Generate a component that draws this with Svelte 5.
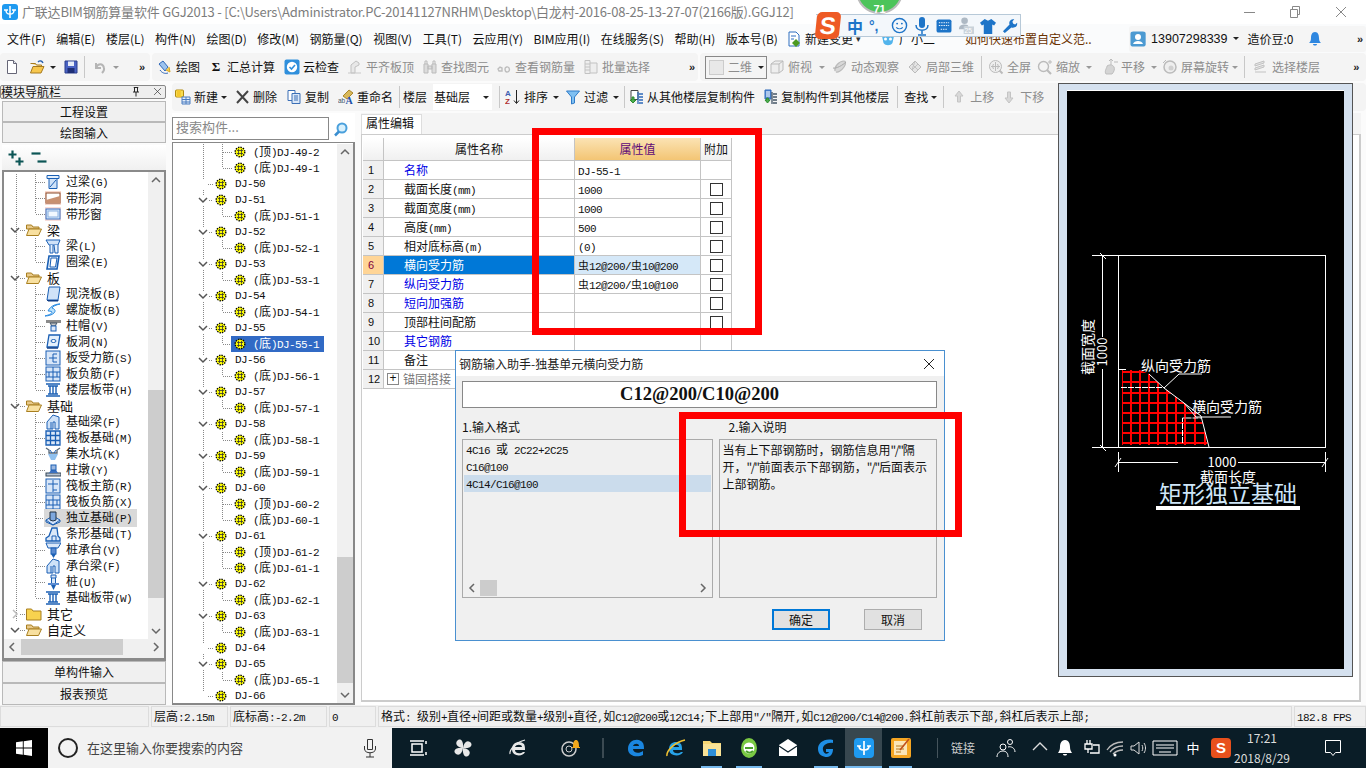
<script>
  const B = '#1a5fb4';
  const L = '#cfe2f8';
  const line = (d, c = B, f = 'none', w = 1) => `<path d="${d}" fill="${f}" stroke="${c}" stroke-width="${w}"/>`;

  // 16x16 icons
  const icons = {
    doc: line('M3.5 1.5h6l3 3v10h-9z', '#667', '#fff') + line('M9.5 1.5v3h3', '#667', '#e4e8f0'),
    open: line('M1.5 4.5h5l1 1.5h5v2', '#a67a20', '#f5d67a') + line('M1.5 14l2.5-6.5h11l-3 6.5z', '#a67a20', '#f7c74d') + line('M9 3c2-2 4-1 5 1', '#2a62b0', 'none', 1.4),
    save: line('M2 2h12v12H2z', '#2b3f8c', '#4a63c4') + '<rect x="5" y="2.5" width="6" height="4.5" fill="#e6ecf8"/><rect x="4.5" y="9" width="7" height="5" fill="#1e2f77"/>',
    undo: line('M5 4v5h5M5 9c2-5 7-5 8 0 .5 2-1 4-2 5', '#b5b5b5', 'none', 2),
    draw: line('M2 5l4-3 5 6-3 4z', '#3168b8', '#9cc3ee') + line('M9 11l4 2-1-5', '#d9a520', '#f5cf50') + line('M3 11c2 3 5 4 8 3', '#3168b8'),
    cloud: '<rect x="0.5" y="0.5" width="15" height="15" rx="2" fill="#2f8fdc"/><circle cx="8" cy="8" r="5.2" fill="#fff"/>' + line('M5.5 8l2 2 3.5-4', '#2f8fdc', 'none', 1.6),
    g1: line('M4 14V6l5-4 3 2v2l-4 2v6z', '#c0c0c0', '#e8e8e8') + line('M1 14h13', '#c8c8c8'),
    g2: line('M2 5h4v9H2zM10 5h4v9h-4zM6 7h4v3H6z', '#bbb', '#dcdcdc') + line('M3 5V2h2v3M11 5V2h2v3', '#bbb'),
    g3: line('M2 10l2-2 2 1v3H3zM9 10c0-2 3-3 4-1s0 4-2 4-2-2-2-3', '#bdbdbd', 'none', 1.4),
    g4: line('M2 1.5h5v13H2zM2 5h5M2 8h5M2 11h5M7 4h7v10H7', '#c2c2c2', '#eee'),
    cube: line('M2 5l4-3h8v9l-4 3H2zM2 5h8v9M10 5l4-3', '#bbb', '#eee'),
    orbit: line('M3 12C2 8 7 2 12 2c2 0 2 3 0 6s-6 6-8 5', '#bbb', '#d8d8d8', 1.2) + line('M1 9c3 1 10-3 13-6', '#aaa'),
    local: line('M2 8l6-6 6 6-6 6z', '#bbb', '#e4e4e4') + line('M5 5l6 6M8 2l-3 9M11 5l-6 6', '#c2c2c2'),
    full: '<circle cx="7.5" cy="7.5" r="6" fill="#eee" stroke="#bbb"/>' + line('M7.5 3v9M3 7.5h9M5.5 5l-1 2.5 1 2.5M9.5 5l1 2.5-1 2.5', '#bbb') + line('M11.5 11.5l3 3', '#bbb', 'none', 2),
    zoom: '<circle cx="6.5" cy="7.5" r="5" fill="#f4f4f4" stroke="#bbb" stroke-width="1.4"/>' + line('M10 11l4 4', '#bbb', 'none', 2.2) + line('M11 3h4M13 1v4', '#bbb'),
    pan: line('M4 15c-2-3 1-6 1-8 3-2 6-1 7 1s0 5-2 7z', '#bdbdbd', '#d4d4d4') + line('M9 0v6M7 2l2-2 2 2M12 3h4', '#bbb'),
    rot: '<circle cx="8" cy="8" r="6" fill="#eee" stroke="#bbb" stroke-width="1.5"/><circle cx="9" cy="9" r="2.5" fill="#d0d0d0"/>' + line('M1 4l3-3', '#bbb'),
    floors: line('M2 5l9-3v2l-9 3zM2 9l9-3v2l-9 3zM2 13h11', '#c2c2c2', '#e4e4e4'),
    newc: '<rect x="0.5" y="1" width="8" height="7" rx="1" fill="#f8dc50" stroke="#b08a10"/><rect x="2" y="1" width="3.8" height="7" fill="#f4c82e"/>' + line('M7 8h8v7H7zM7 10.5h8M7 13h8M11 8v7', '#4a7cc0', '#e4eefa'),
    del: line('M3 2l11 12M14 2L3 14', '#444', 'none', 2),
    copy: line('M2 1.5h7v10H2z', '#3b6fb6', '#fff') + line('M6 4.5h8v10H6z', '#3b6fb6', '#dbe8f8') + line('M8 7h4M8 9h4M8 11h4', '#3b6fb6'),
    rename: line('M5 7l6-6 4 3-6 6z', '#a9862a', '#d8b85a') + '<text x="0" y="14" font-size="6.500" fill="#456" font-family="Liberation Sans">ab</text><text x="7.500" y="15" font-size="10" font-weight="700" fill="#1c4fa8" font-family="Liberation Serif">A</text>',
    sort: '<text x="0" y="7" font-size="8" font-weight="700" fill="#3f5fb0" font-family="Liberation Sans">A</text><text x="0" y="15" font-size="8" font-weight="700" fill="#b03030" font-family="Liberation Sans">Z</text>' + line('M11.5 1v13M9 11.5l2.5 3 2.5-3', '#222'),
    filter: line('M1.5 2h13L9.5 8v6l-3 1V8z', '#2f7bc8', '#7fc0f2'),
    fromc: line('M3 1.5h7v9H3z', '#444', '#fff') + line('M2 11l3 3 3-3H6V8H4v3z', '#2e8b2e', '#4cb050') + line('M11 5h4M11 8h4M11 11h4M11 14h4M10 3v12', '#2d68b8', 'none', 1.3),
    toc: line('M3 1h6v9H3z', '#2d68b8', '#5b8fd8') + line('M4 3h4M4 5h4M4 7h4', '#fff') + line('M3 11l2.5 3 2.5-3H6.3V9H4.700v2z', '#2e8b2e', '#4cb050') + line('M11 5h4M11 8h4M11 11h4M11 14h4M10 3v12', '#456', 'none', 1.3),
    up: line('M8 2l4 5h-2.500v6h-3V7H4z', '#c4c4c4', '#d8d8d8'),
    down: line('M8 14l4-5H9.500V3h-3v6H4z', '#c4c4c4', '#d8d8d8'),
    change: line('M3 1h7l3 3v11H3z', '#2f6fc0', '#fff') + line('M5 5h5M5 8h3', '#2f6fc0') + '<path d="M10 8l4 4-4 4-4-4z" fill="#4d9a22"/>',
    robot: '<path d="M2 5h12l-1.500 7c-2 3-7 3-9 0z" fill="#52b4ec"/><circle cx="5.500" cy="8" r="1.500" fill="#fff"/><circle cx="10.500" cy="8" r="1.500" fill="#fff"/>',
    user: '<rect x="0.500" y="0.500" width="16" height="19" rx="3" fill="#4c9ad2" transform="scale(.95 .8)"/><circle cx="8" cy="6" r="3" fill="#fff"/><path d="M3 13c1-4 9-4 10 0z" fill="#fff"/>',
    bell: '<path d="M8 1c3 0 4 3 4 6s1 4 2 5H2c1-1 2-2 2-5s1-6 4-6z" fill="#2f87e0"/><path d="M6 13h4c0 2-4 2-4 0z" fill="#2f87e0"/>',
    plus: line('M4.500 0.500v8M0.500 4.500h8', '#0c5555', 'none', 2.200) + line('M11.500 7.500v8M7.500 11.500h8', '#0c5555', 'none', 2.200),
    minus: line('M0.500 3.500h9', '#0c5555', 'none', 2.200) + line('M6.500 11.500h9', '#0c5555', 'none', 2.200),
    search: '<circle cx="9" cy="7" r="4.500" fill="#d8f0fc" stroke="#4aa0dc" stroke-width="2"/>' + line('M6 10.500l-4 4', '#3a8ed0', 'none', 2.500),
    pin: line('M5 2h6M6 2v6M10 2v6M4 8h8M8 8v6', '#222', 'none', 1.300),
    close: line('M3 3l10 10M13 3L3 13', '#333'),
    // nav tree
    lintel: line('M2 1.500h12v3H2z', B, '#e4f0fc') + line('M4 4.500h8v10H4z', B, L) + line('M5 13l6-7', B),
    hole: '<rect x="0" y="1" width="16" height="14" fill="#f8d8cc"/><rect x="1" y="3" width="14" height="10" fill="#fff" stroke="#8a4a2a"/><path d="M1 10l14-4v7H1z" fill="#c89070"/>',
    win: '<rect x="0" y="1" width="16" height="14" fill="#f8dcd8"/><rect x="1" y="3" width="14" height="10" fill="#d8e8fa" stroke="#3a70c0"/><rect x="3" y="5" width="10" height="6" fill="#f2f8ff" stroke="#8ab0e0"/>',
    beam: line('M1 2h14l-2 5H4z', B, L) + line('M5 7v8h3V7M9 7l1 8h3V7', B, '#e4f0fc'),
    ring: line('M4 2h10l-2 13H2z', B, '#e4f0fc', 1.600) + line('M6 4h6l-1.500 9H5z', B, '#fff'),
    slab: line('M4 1h11l-2 13H2z', B, L) + line('M2 14l1 1h10l0-1', '#113f88', '#113f88'),
    spiral: line('M3 9C6 3 12 2 15 2c-4 1-7 2-8 4 3 1 4 3 2 5s-6 3-9 3c3-1 7-2 7-4-1-1-3-1-4-1z', '#2a8ae0', '#b8e0fb'),
    cap: '<rect x="1" y="2" width="15" height="3" fill="#8a8a8a"/><path d="M5 5h7l-2 3H7z" fill="#c8c8c8" stroke="#456"/><rect x="6" y="8" width="5" height="5" fill="#dde8f8" stroke="#1a5fb4"/>',
    slabh: line('M4 1h11l-2 12H2z', B, '#e4f0fc', 1.300) + '<ellipse cx="8.500" cy="7" rx="2.500" ry="1.500" fill="#fff" stroke="#1a5fb4"/>' + line('M2 14h11', '#113f88', 'none', 1.500),
    srebar: '<rect x="1" y="1" width="14" height="14" fill="#d8e6f8" stroke="#1a5fb4"/>' + line('M8 4v8M8 4h4M4 8h8M8 12h4', '#1a5fb4'),
    sneg: '<rect x="1" y="1" width="14" height="14" fill="#d8e6f8" stroke="#1a5fb4"/>' + line('M8 1v14M1 6h14M1 11h14M4 6v5M12 6v5', '#1a5fb4'),
    band: line('M1 2h14M1 14h14M3 4h10M3 12h10M5 4v8M8 4v8M11 4v8', B, 'none', 1.400),
    fbeam: line('M2 15V8l6-7 6 2v12h-4V8H8v7z', B, L) + line('M6 15V8', B),
    raft: line('M1 1h14v14H1zM1 5.500h14M1 10.500h14M5.500 1v14M10.500 1v14', B, '#dbe8f8', 1.300),
    pit: line('M1 2l3 2v3h8V4l3-2', '#567', 'none', 1.300) + '<path d="M3 8h10l-3 6H6z" fill="#8fc0ef"/>' + line('M5 4l2 3M11 4L9 7', '#1a5fb4'),
    pier: '<rect x="1" y="11" width="15" height="3" fill="#b8c4d4" stroke="#345"/><path d="M4 11l2-3h5l2 3z" fill="#3a70c0"/><rect x="6" y="3" width="5" height="5" fill="#9cb8e0" stroke="#1a5fb4"/>',
    rmain: '<rect x="1" y="1" width="14" height="14" fill="#d8e6f8" stroke="#1a5fb4"/>' + line('M8 2v12M3 6h10M8 12h4', B),
    iso: line('M1 10l7-4 7 4-7 5z', B, '#cfe0f8') + line('M5 2h6v8l-3 1-3-1z', '#234', '#7fa8de') + line('M1 10v2l7 3 7-3v-2', B),
    sf: line('M1 15v-3l3-2 3-8h5l1 8 2 2v3z', B, '#dbe8f8', 1.300) + line('M7 15v-5h4v5', B),
    pcap: line('M1 1h15l-3 5H3z', B, '#dbe8f8') + '<rect x="6" y="6" width="5" height="6" fill="#5b8bd0" stroke="#1a5fb4"/><path d="M6 12h5l-2.500 4z" fill="#1a5fb4"/>',
    pile: line('M6 1h5v3H6zM6.500 4v6h4V4', B, '#dbe8f8') + '<path d="M3 9h11v2H3z" fill="#5b8bd0"/><path d="M6 11h5l-2.500 5z" fill="#1a5fb4"/>'
  };

  const tb1a = [
    { i: 'doc', ml: 4 }, { i: 'open', ml: 9 }, { dd: 1, ml: 5 }, { i: 'save', ml: 7 },
    { sep: 1, ml: 5 }, { i: 'undo', ml: 6, grey: 1 }, { dd: 1, ml: 6, grey: 1 }, { more: 1, ml: 20 }
  ];
  const tb1b = [
    { i: 'draw', t: '绘图', ml: 5 }, { sym: 'Σ', t: '汇总计算', ml: 8 }, { i: 'cloud', t: '云检查', ml: 9 },
    { i: 'g1', t: '平齐板顶', ml: 8, grey: 1 }, { i: 'g2', t: '查找图元', ml: 8, grey: 1 },
    { i: 'g3', t: '查看钢筋量', ml: 7, grey: 1 }, { i: 'g4', t: '批量选择', ml: 8, grey: 1 }, { more: 1, ml: 39 }
  ];
  const tb1c = [
    { combo: '二维', ml: 5 },
    { i: 'cube', t: '俯视', ml: 2, grey: 1 }, { dd: 1, ml: 7, grey: 1 },
    { i: 'orbit', t: '动态观察', ml: 7, grey: 1 }, { i: 'local', t: '局部三维', ml: 8, grey: 1 },
    { sep: 1, ml: 7 }, { i: 'full', t: '全屏', ml: 6, grey: 1 },
    { i: 'zoom', t: '缩放', ml: 6, grey: 1 }, { dd: 1, ml: 6, grey: 1 },
    { i: 'pan', t: '平移', ml: 10, grey: 1 }, { dd: 1, ml: 6, grey: 1 },
    { i: 'rot', t: '屏幕旋转', ml: 5, grey: 1 }, { dd: 1, ml: 3, grey: 1 },
    { sep: 1, ml: 6 }, { i: 'floors', t: '选择楼层', ml: 8, grey: 1 }, { more: 1, ml: 33 }
  ];
  const tb2 = [
    { i: 'newc', t: '新建', ml: 3 }, { dd: 1, ml: 3 }, { i: 'del', t: '删除', ml: 7 }, { i: 'copy', t: '复制', ml: 9 },
    { i: 'rename', t: '重命名', ml: 9 }, { sep: 1, ml: 6 }, { lbl: '楼层', ml: 3 }, { floor: '基础层', ml: 6 }, { sep: 1, ml: 7 },
    { i: 'sort', t: '排序', ml: 5 }, { dd: 1, ml: 5 }, { i: 'filter', t: '过滤', ml: 6 }, { dd: 1, ml: 5 }, { sep: 1, ml: 5 },
    { i: 'fromc', t: '从其他楼层复制构件', ml: 3 }, { i: 'toc', t: '复制构件到其他楼层', ml: 7 }, { sep: 1, ml: 8 },
    { lbl: '查找', ml: 6 }, { dd: 1, ml: 3 }, { sep: 1, ml: 6 },
    { i: 'up', t: '上移', ml: 7, grey: 1 }, { i: 'down', t: '下移', ml: 7, grey: 1 }
  ];

  const menu = ['文件(F)', '编辑(E)', '楼层(L)', '构件(N)', '绘图(D)', '修改(M)', '钢筋量(Q)', '视图(V)', '工具(T)', '云应用(Y)', 'BIM应用(I)', '在线服务(S)', '帮助(H)', '版本号(B)'];

  // nav tree: k 0 = folder, 1 = leaf; last closes the child guide
  const nav = [
    { k: 1, i: 'lintel', t: '过梁(G)' }, { k: 1, i: 'hole', t: '带形洞' }, { k: 1, i: 'win', t: '带形窗', last: 1 },
    { k: 0, t: '梁' }, { k: 1, i: 'beam', t: '梁(L)' }, { k: 1, i: 'ring', t: '圈梁(E)', last: 1 },
    { k: 0, t: '板' }, { k: 1, i: 'slab', t: '现浇板(B)' }, { k: 1, i: 'spiral', t: '螺旋板(B)' }, { k: 1, i: 'cap', t: '柱帽(V)' },
    { k: 1, i: 'slabh', t: '板洞(N)' }, { k: 1, i: 'srebar', t: '板受力筋(S)' }, { k: 1, i: 'sneg', t: '板负筋(F)' }, { k: 1, i: 'band', t: '楼层板带(H)', last: 1 },
    { k: 0, t: '基础' }, { k: 1, i: 'fbeam', t: '基础梁(F)' }, { k: 1, i: 'raft', t: '筏板基础(M)' }, { k: 1, i: 'pit', t: '集水坑(K)' }, { k: 1, i: 'pier', t: '柱墩(Y)' },
    { k: 1, i: 'rmain', t: '筏板主筋(R)' }, { k: 1, i: 'sneg', t: '筏板负筋(X)' }, { k: 1, i: 'iso', t: '独立基础(P)', sel: 1 }, { k: 1, i: 'sf', t: '条形基础(T)' },
    { k: 1, i: 'pcap', t: '桩承台(V)' }, { k: 1, i: 'fbeam', t: '承台梁(F)' }, { k: 1, i: 'pile', t: '桩(U)' }, { k: 1, i: 'band', t: '基础板带(W)', last: 1 },
    { k: 0, t: '其它', shut: 1 }, { k: 0, t: '自定义' }
  ];

  // component tree
  const kids = { 50: [], 64: [], 66: [], 60: ['顶-2', '底-1'], 61: ['顶-2', '底-1'] };
  const dj = [{ c: 1, pre: '顶', t: 'DJ-49-2' }, { c: 1, pre: '底', t: 'DJ-49-1', last: 1 }];
  for (let n = 50; n <= 66; n++) {
    const list = kids[n] || ['底-1'];
    dj.push({ c: 0, t: `DJ-${n}`, open: list.length > 0, end: n === 66 });
    list.forEach((s, idx) => {
      const [pre, no] = s.split('-');
      dj.push({ c: 1, pre, t: `DJ-${n}-${no}`, last: idx === list.length - 1, sel: n === 55 });
    });
  }

  const props = [
    { n: '名称', v: 'DJ-55-1', link: 1, nocheck: 1 }, { n: '截面长度(mm)', v: '1000' }, { n: '截面宽度(mm)', v: '1000' },
    { n: '高度(mm)', v: '500' }, { n: '相对底标高(m)', v: '(0)' },
    { n: '横向受力筋', v: '虫12@200/虫10@200', link: 1, cur: 1 }, { n: '纵向受力筋', v: '虫12@200/虫10@100', link: 1 },
    { n: '短向加强筋', v: '', link: 1 }, { n: '顶部柱间配筋', v: '' }, { n: '其它钢筋', v: '', link: 1, nocheck: 1 },
    { n: '备注', v: '', nocheck: 1 }, { n: '锚固搭接', v: '', plus: 1, nocheck: 1 }
  ];

  const split = (s) => s.split(/([\x00-\x7f]+)/).filter(Boolean).map((p) => ({ p, lat: /^[\x00-\x7f]/.test(p) }));

  // drawing of the footing, in page coordinates
  const meshX = [1122, 1131, 1140, 1149, 1158, 1167, 1176, 1185, 1195, 1205];
  const meshY = [371, 381, 392, 402, 412, 422, 432, 442];

  const task = [
    { w: 37, i: 'tv' }, { w: 56, i: 'fan' }, { w: 53, i: 'ie0' }, { w: 52, i: 'spin' }, { w: 19, sep: 1 }, { w: 42, i: 'edge' }, { w: 37, i: 'ie' },
    { w: 35, i: 'files', on: 1 }, { w: 40, i: 'gie', on: 1 }, { w: 38, i: 'mail' }, { w: 38, i: 'gl', on: 1 }, { w: 37, i: 'app', on: 1, act: 1 }, { w: 37, i: 'note', on: 1 }
  ];
  const tk = {
    tv: line('M3 3h14M3 17h14M5 6h10v8H5zM19 6V3M19 17v-3', '#fff', 'none', 1.500),
    fan: '<path d="M10 10C4 9 2 6 4 3s7-2 6 7zM10 10c1-6 4-8 7-6s2 7-7 6zM10 10c6 1 8 4 6 7s-7 2-6-7zM10 10c-1 6-4 8-7 6s-2-7 7-6z" fill="#e8e8e8"/>',
    ie0: '<path d="M4 11c0-7 8-9 12-5 1 2 1 4 1 6H7c0 4 6 4 8 2h2c-2 5-13 5-13-3zM7 9h7c0-3-6-3-7 0z" fill="#e8e8e8"/>' + line('M2 16C1 12 8 4 17 2', '#e8e8e8', 'none', 1.200),
    spin: '<circle cx="9" cy="11" r="7" fill="none" stroke="#ccc" stroke-width="1.500"/><circle cx="9" cy="11" r="3" fill="none" stroke="#ccc"/><path d="M13 9c0-5 1-7 3-7s3 2 3 7h1v1h-8V9z" fill="#f3a81c"/>',
    edge: '<path d="M2 11C2 3 10 0 15 3c3 2 3 5 3 8H7c0 4 6 5 10 2v4c-6 3-15 1-15-6zM7 8h6c0-3-5-3-6 0z" fill="#1a86e0"/>',
    ie: '<path d="M3 11C3 4 11 2 15 6c1 2 1 4 1 6H7c0 4 6 4 8 2h2c-2 5-14 5-14-3zM7 9h6c0-3-6-3-6 0z" fill="#27a3e8"/>' + line('M1 18C0 13 9 4 19 2', '#f2c230', 'none', 1.500),
    files: '<path d="M1 3h7l2 2h9v13H1z" fill="#f7d774"/><rect x="1" y="6" width="18" height="12" fill="#f9e296"/><rect x="6" y="11" width="8" height="7" fill="#2e8fd8"/>',
    gie: '<ellipse cx="10" cy="10" rx="8" ry="10" fill="#7ac943"/><circle cx="10" cy="10" r="5.500" fill="#fff"/><path d="M6 10h8M7 13c2 2 5 2 7 0" fill="none" stroke="#4aa02a" stroke-width="2"/>',
    mail: '<path d="M1 7l9-6 9 6v11H1z" fill="#fff"/><path d="M1 8l9 6 9-6" fill="none" stroke="#0b1f2a" stroke-width="1.200"/>',
    gl: '<path d="M17 2C8 0 2 5 2 11s5 8 9 8 6-4 6-8h-7v3h3c-1 2-5 3-6-2s5-8 10-7z" fill="#1e8fe6"/>',
    app: '<rect x="0" y="0" width="20" height="20" rx="4" fill="#1e9af0"/><path d="M10 3v14M5 8c0 4 3 4 5 4s5 0 5-4M3 8h4M13 8h4" fill="none" stroke="#fff" stroke-width="1.700"/>',
    note: '<rect x="0" y="0" width="20" height="20" rx="2" fill="#f5a623"/><rect x="3" y="3" width="13" height="14" fill="#fbe6b8"/><path d="M5 8h8M5 11h8M5 14h5" stroke="#b87a20"/><path d="M18 1L9 12" stroke="#c0501c" stroke-width="1.600"/>'
  };
  const tray = [
    { w: 22, d: line('M3 12l7-7 7 7', '#ddd', 'none', 1.400) },
    { w: 28, d: '<path d="M10 2c4 0 5 4 5 7s1 4 2 6H3c1-2 2-3 2-6s1-7 5-7z" fill="#fff"/><path d="M8 16h4c0 2-4 2-4 0z" fill="#fff"/>' },
    { w: 24, d: line('M6 2v4M9 2v4M4 6h7v5H4zM7 11v4M12 7h6v8h-9', '#fff', 'none', 1.300) },
    { w: 24, d: line('M2 12c4-6 10-8 16-8M5 14c3-4 7-6 13-6M8 16c2-2 5-4 10-4', '#bbb', 'none', 1.300) + '<circle cx="10" cy="17" r="1.500" fill="#fff"/>' },
    { w: 23, d: line('M2 8h3l5-4v12l-5-4H2zM13 7c1 2 1 4 0 6M15 5c2 3 2 7 0 10', '#ddd') },
    { w: 30, wide: 1, d: line('M1 3h24v14H1z', '#fff') + line('M4 7h18M4 10h18M7 14h12', '#fff', 'none', 1.200) }
  ];
</script>

{#snippet icon(name, size = 16)}
  <svg class="ico" width={size} height={size} viewBox="0 0 16 16">{@html icons[name]}</svg>
{/snippet}

{#snippet mix(text)}
  {#each split(text) as s}<span class:lat={s.lat}>{s.p}</span>{/each}
{/snippet}

{#snippet gear()}
  <svg class="ico" width="12" height="12" viewBox="0 0 12 12">
    <circle cx="6" cy="6" r="4.800" fill="#ff0" stroke="#000" stroke-width="1.400" stroke-dasharray="1.400 1.100" />
    <path d="M3 4.500h6M3 7.500h6M4.500 3v6M7.500 3v6" stroke="#333" stroke-width=".8" />
  </svg>
{/snippet}

{#snippet chev(dir = 'down', color = '#555')}
  <svg class="ico" width="10" height="10" viewBox="0 0 10 10">
    {#if dir === 'down'}<path d="M1 3l4 4 4-4" fill="none" stroke={color} stroke-width="1.500" />{/if}
    {#if dir === 'up'}<path d="M1 7l4-4 4 4" fill="none" stroke={color} stroke-width="1.500" />{/if}
    {#if dir === 'left'}<path d="M7 1L3 5l4 4" fill="none" stroke={color} stroke-width="1.500" />{/if}
    {#if dir === 'right'}<path d="M3 1l4 4-4 4" fill="none" stroke={color} stroke-width="1.500" />{/if}
  </svg>
{/snippet}

{#snippet bar(items)}
  {#each items as it}
    <div class="tool" class:grey={it.grey} style="margin-left:{it.ml}px">
      {#if it.sep}<span class="sep"></span>
      {:else if it.dd}<span class="dd"></span>
      {:else if it.more}<span class="more">»</span>
      {:else if it.combo}<span class="combo"><i class="sq"></i>{it.combo}<span class="dd"></span></span>
      {:else if it.floor}<span class="floor">{it.floor}<span class="dd dk"></span></span>
      {:else if it.lbl}<span>{it.lbl}</span>
      {:else}
        {#if it.sym}<span class="sym">{it.sym}</span>{:else}{@render icon(it.i)}{/if}
        {#if it.t}<span class="tt">{it.t}</span>{/if}
      {/if}
    </div>
  {/each}
{/snippet}

<div class="app">
  <header class="title">
    <svg class="ico" width="16" height="16" viewBox="0 0 16 16"><rect width="16" height="16" rx="3" fill="#1e9af0" /><path d="M8 2v12M4 6c0 4 2 4 4 4s4 0 4-4M2 6h4M10 6h4" fill="none" stroke="#fff" stroke-width="1.500" /></svg>
    <span class="ttext">广联达BIM钢筋算量软件 GGJ2013 - [C:\Users\Administrator.PC-20141127NRHM\Desktop\白龙村-2016-08-25-13-27-07(2166版).GGJ12]</span>
    <div class="winbtns">
      <span class="wmin"></span>
      <svg width="12" height="12" viewBox="0 0 12 12"><path d="M1.500 3.500h7v8h-7zM3.500 3.500v-3h7v8h-2" fill="none" stroke="#888" /></svg>
      <svg width="12" height="12" viewBox="0 0 12 12"><path d="M1 1l10 10M11 1L1 11" stroke="#888" /></svg>
    </div>
  </header>

  <nav class="menu">
    <div class="mitems">
      {#each menu as m}<span>{m}</span>{/each}
    </div>
    <div class="mextra">
      {@render icon('change')}<span>新建变更</span>
      <span class="mdd">▾</span>
      {@render icon('robot')}<span>广小二</span>
    </div>
    <div class="news">如何快速布置自定义范..</div>
    <div class="account">
      {@render icon('user')}
      <span class="phone">13907298339</span>
      <span class="dd dk"></span>
      <span class="beans">造价豆:0</span>
      <span class="abell">{@render icon('bell')}</span>
      <span class="more amore">»</span>
    </div>
  </nav>

  <div class="toolbar">
    <div class="grp g1">{@render bar(tb1a)}</div>
    <div class="grp g2">{@render bar(tb1b)}</div>
    <div class="grp g3">{@render bar(tb1c)}</div>
  </div>

  <div class="work">
    <aside class="nav">
      <div class="navhead">
        <span>模块导航栏</span>
        <span class="navbtns">{@render icon('pin', 12)}{@render icon('close', 11)}</span>
      </div>
      <button class="navbtn top first">工程设置</button>
      <button class="navbtn top">绘图输入</button>
      <div class="navpanel">
        <div class="navtools">{@render icon('plus')}{@render icon('minus')}</div>
        <div class="navbox">
          <div class="navscroll">
            <div class="navtree">
              {#each nav as n, idx}
                <div class="nrow">
                  {#if idx < 28}<i class="gv g16"></i>{/if}
                  {#if n.k === 1}
                    <i class="gv g35" class:half={n.last}></i>
                    <i class="gh gh1"></i>
                    <span class="nico leaf" class:on={n.sel}>
                      {@render icon(n.i)}
                      <span class="ntext">{@render mix(n.t)}</span>
                    </span>
                  {:else}
                    <span class="nfold">
                      {@render chev(n.shut ? 'right' : 'down', n.shut ? '#bbb' : '#555')}
                      <i class="gh2"></i>
                      <svg class="ico" width="16" height="16" viewBox="0 0 16 16">
                        {#if n.shut}
                          <path d="M.5 3h5l1.500 2h8v9H.5z" fill="#f8d24f" stroke="#a87f20" />
                        {:else}
                          <path d="M.5 3h5l1.500 2h6v2H.5z" fill="#e8c98a" stroke="#a87f20" />
                          <path d="M.5 13.500L3 7h12.500l-3 6.500z" fill="#f8e0a0" stroke="#a87f20" />
                        {/if}
                      </svg>
                      <span class="ntext fold">{n.t}</span>
                    </span>
                  {/if}
                </div>
              {/each}
            </div>
            <div class="vbar">
              <span class="arr">{@render chev('up', '#666')}</span>
              <div class="track t1"><i class="thumb"></i></div>
              <span class="arr">{@render chev('down', '#666')}</span>
            </div>
          </div>
          <div class="hbar">
            <span class="arr">{@render chev('left', '#666')}</span>
            <div class="htrack"><i></i></div>
            <span class="arr">{@render chev('right', '#666')}</span>
          </div>
        </div>
      </div>
      <button class="navbtn">单构件输入</button>
      <button class="navbtn">报表预览</button>
    </aside>

    <div class="center">
      <div class="toolbar2">{@render bar(tb2)}</div>
      <div class="cols">
        <section class="comps">
          <div class="searchrow">
            <span class="searchbox">搜索构件...</span>
            <span class="searchbtn">{@render icon('search')}</span>
          </div>
          <div class="treebox">
            <div class="tree">
              {#each dj as d}
                <div class="drow">
                  {#if !d.end}<i class="gv g30"></i>{:else}<i class="gv g30 half"></i>{/if}
                  {#if d.c}
                    <i class="gv g49" class:half={d.last}></i>
                    <i class="gh gh3"></i>
                    <span class="dchild" class:sel={d.sel}>
                      {@render gear()}
                      <span class="dlabel">(<span>{d.pre}</span>){d.t}</span>
                    </span>
                  {:else}
                    <span class="droot">
                      <span class="dchev">{#if d.open}{@render chev('down', '#555')}{/if}</span>
                      <i class="gh4" class:long={!d.open}></i>
                      {@render gear()}
                      <span class="dname">{d.t}</span>
                    </span>
                  {/if}
                </div>
              {/each}
            </div>
            <div class="vbar v2">
              <span class="arr">{@render chev('up', '#666')}</span>
              <div class="track t2"><i class="thumb"></i></div>
              <span class="arr">{@render chev('down', '#666')}</span>
            </div>
          </div>
        </section>

        <section class="editor">
          <div class="tabs"><span class="tab">属性编辑</span></div>
          <div class="page">
            <div class="grid">
              <div class="gr head">
                <span class="c0"></span>
                <span class="c1 ctr">属性名称</span>
                <span class="c2 hv">属性值</span>
                <span class="c3">附加</span>
              </div>
              {#each props as p, i}
                <div class="gr" class:cur={p.cur}>
                  <span class="c0">{i + 1}</span>
                  <span class="c1 nm" class:link={p.link} class:muted={p.plus}>
                    {#if p.plus}<i class="plusbox">+</i>{/if}
                    {@render mix(p.n)}
                  </span>
                  <span class="c2 val">{@render mix(p.v)}</span>
                  <span class="c3">{#if !p.nocheck}<i class="chk"></i>{/if}</span>
                </div>
              {/each}
            </div>
          </div>
        </section>
      </div>
    </div>
  </div>

  <footer class="status">
    <span class="st s0"></span>
    <span class="st s1">{@render mix('层高:2.15m')}</span>
    <span class="st s2">{@render mix('底标高:-2.2m')}</span>
    <span class="st s3">{@render mix('0')}</span>
    <span class="st s4">{@render mix('格式: 级别+直径+间距或数量+级别+直径,如C12@200或12C14;下上部用"/"隔开,如C12@200/C14@200.斜杠前表示下部,斜杠后表示上部;')}</span>
    <span class="st s5">{@render mix('182.8 FPS')}</span>
  </footer>

  <div class="taskbar">
    <div class="start">
      <svg width="16" height="16" viewBox="0 0 16 16"><path d="M0 2.300l6.800-1V7.600H0zM7.700 1.200L16 0v7.600H7.700zM0 8.400h6.800v6.400l-6.800-1zM7.700 8.400H16V16l-8.300-1.200z" fill="#fff" /></svg>
    </div>
    <div class="tsearch">
      <i class="cortana"></i>
      <span class="thint">在这里输入你要搜索的内容</span>
      <svg width="16" height="20" viewBox="0 0 16 20"><path d="M5.500 1.500h5v10h-5z M2.500 8v3c0 5 11 5 11 0V8M8 15v4M4 19h8" fill="none" stroke="#333" /></svg>
    </div>
    <div class="tapps">
      {#each task as a}
        <span class="tapp" class:act={a.act} class:on={a.on} style="width:{a.w}px">
          {#if a.sep}<i class="tsep"></i>{:else}<svg width="20" height="20" viewBox="0 0 20 20">{@html tk[a.i]}</svg>{/if}
        </span>
      {/each}
    </div>
    <div class="tlink">链接</div>
    <svg class="people" width="22" height="20" viewBox="0 0 22 20"><circle cx="8" cy="9" r="3" fill="none" stroke="#fff" /><circle cx="15" cy="4" r="2.500" fill="none" stroke="#fff" /><path d="M2 19c0-4 3-6 6-6s5 2 5 6M13 9c3-1 7 1 7 5" fill="none" stroke="#fff" /></svg>
    <div class="tray">
      {#each tray as t}
        <span style="width:{t.w}px"><svg width={t.wide ? 26 : 20} height="20" viewBox={t.wide ? '0 0 26 20' : '0 0 20 20'}>{@html t.d}</svg></span>
      {/each}
      <span class="tzh">中</span>
      <span class="ts">S</span>
      <span class="clock"><b>17:21</b><b>2018/8/29</b></span>
      <svg class="notif" width="18" height="20" viewBox="0 0 18 20"><path d="M1.500 2.500h15v12h-5l-2.500 3-2.500-3h-5z" fill="none" stroke="#fff" /></svg>
    </div>
  </div>

  <!-- floating drawing window -->
  <div class="preview">
    <svg class="cad" width="277" height="578" viewBox="1067 90 277 578">
      <defs>
        <clipPath id="footing"><path d="M1122 369h18l9 4 15 14 20 15 17 13 7 29h-86z" /></clipPath>
      </defs>
      <rect x="1118.500" y="254.500" width="207" height="192" fill="none" stroke="#fff" />
      <g clip-path="url(#footing)" stroke="#f00" stroke-width="2">
        {#each meshX as x}<path d="M{x} 360v90" />{/each}
        {#each meshY as y}<path d="M1118 {y}h100" />{/each}
      </g>
      <g stroke="#fff" fill="none">
        <path d="M1119 368.500h7M1149 373l15 14 20 15 17 13 8 31" />
        <path d="M1121 386.500h44M1182.500 442v-25h19" stroke-dasharray="6 1" />
        <path d="M1164 387l15-14h23M1184 402l12 14h35" />
        <path d="M1102.500 254v192M1092 254.500h28M1092 446.500h28M1100 252l6 6M1100 444l6 6" />
        <path d="M1118.500 451v20M1325.500 451v20M1118 461.500h60M1238 461.500h88M1115 466l6-9M1322 466l6-9" />
      </g>
      <rect x="1096" y="336" width="14" height="32" fill="#000" />
      <g class="cadtext">
        <text x="1141" y="370" font-size="14">纵向受力筋</text>
        <text x="1192" y="411" font-size="14">横向受力筋</text>
        <text x="1222" y="466" font-size="13" text-anchor="middle">1000</text>
        <text x="1228" y="481" font-size="14" text-anchor="middle">截面长度</text>
        <text transform="translate(1107 351) rotate(-90)" font-size="13" text-anchor="middle">1000</text>
        <text transform="translate(1093 346) rotate(-90)" font-size="14" text-anchor="middle">截面宽度</text>
        <text class="captitle" x="1228" y="501" font-size="23" text-anchor="middle">矩形独立基础</text>
      </g>
      <rect x="1156" y="505" width="144" height="4" fill="#fff" />
    </svg>
  </div>

  <!-- rebar input dialog -->
  <div class="dialog">
    <div class="dtitle">
      <span>钢筋输入助手-独基单元横向受力筋</span>
      <svg width="12" height="12" viewBox="0 0 12 12"><path d="M1 1l10 10M11 1L1 11" stroke="#222" /></svg>
    </div>
    <div class="dbody">
      <div class="dinput">C12@200/C10@200</div>
      <div class="dcols">
        <div class="dcol dleft">
          <div class="dlab">1.输入格式</div>
          <div class="dlist">
            <div class="ditems">
              <div class="ditem">{@render mix('4C16 或 2C22+2C25')}</div>
              <div class="ditem">{@render mix('C16@100')}</div>
              <div class="ditem sel">{@render mix('4C14/C16@100')}</div>
            </div>
            <div class="hbar dh">
              <span class="arr">{@render chev('left', '#666')}</span>
              <div class="htrack"><i></i></div>
              <span class="arr">{@render chev('right', '#666')}</span>
            </div>
          </div>
        </div>
        <div class="dcol dright">
          <div class="dlab lab2">2.输入说明</div>
          <div class="dnote">当有上下部钢筋时，钢筋信息用<span class="qt">"/"</span>隔<br />开，<span class="qt">"/"</span>前面表示下部钢筋，<span class="qt">"/"</span>后面表示<br />上部钢筋。</div>
        </div>
      </div>
      <div class="dbtns">
        <button class="dbtn ok">确定</button>
        <button class="dbtn">取消</button>
      </div>
    </div>
  </div>

  <!-- annotations drawn on top of the capture -->
  <div class="mark m1"></div>
  <div class="mark m2"></div>

  <!-- input method bar -->
  <div class="imeball">71</div>
  <div class="ime">
    <span class="imelogo">S</span>
    <span class="imez">中</span>
    <span class="imep">°,</span>
    <svg width="17" height="17" viewBox="0 0 18 18"><circle cx="9" cy="9" r="7.500" fill="none" stroke="#1d74c8" stroke-width="1.500" /><circle cx="6.500" cy="7" r="1" fill="#1d74c8" /><circle cx="11.500" cy="7" r="1" fill="#1d74c8" /><path d="M5.500 11c2 2 5 2 7 0" fill="none" stroke="#1d74c8" stroke-width="1.200" /></svg>
    <svg width="16" height="20" viewBox="0 0 16 20"><rect x="5" y="1" width="6" height="11" rx="3" fill="#1d74c8" /><path d="M2 9c0 7 12 7 12 0M8 15v3M4 19h8" fill="none" stroke="#1d74c8" stroke-width="1.500" /></svg>
    <svg width="16" height="14" viewBox="0 0 17 15"><rect x=".5" y=".5" width="16" height="14" rx="2" fill="#1d74c8" /><path d="M3 4h11M3 7h11M5 11h7" stroke="#fff" stroke-dasharray="1.500 1" /></svg>
    <svg width="16" height="17" viewBox="0 0 17 18"><circle cx="7" cy="4" r="3.500" fill="#aeb9c4" /><path d="M1 13c0-4 3-5 6-5s4 1 4 2H7v3z" fill="#aeb9c4" /><rect x="6" y="10" width="11" height="8" fill="#c9d2da" /><text x="7" y="16.500" font-size="7" fill="#fff" font-family="Liberation Sans">25</text></svg>
    <svg width="16" height="16" viewBox="0 0 17 17"><path d="M5 1l3.500 2L12 1l5 4-2 3-2-1v10H4V7L2 8 0 5z" fill="#1d74c8" /></svg>
    <svg width="16" height="16" viewBox="0 0 17 17"><path d="M1 14l7-7c-1-3 1-6 5-6l-2 3 1 2 2 1 2-2c1 4-3 6-6 5l-7 6z" fill="#1d74c8" /></svg>
  </div>
</div>

<style>
  :global(body) {
    margin: 0;
    overflow: hidden;
    background: #fff;
  }

  .app {
    position: relative;
    display: flex;
    flex-direction: column;
    width: 1366px;
    height: 768px;
    overflow: hidden;
    background: #fbfbfb;
    color: #111;
    font: 12px/16px "Noto Sans CJK SC", "Liberation Sans", sans-serif;
  }

  .ico {
    display: block;
    flex: none;
  }

  .lat {
    font: 11px/16px "Liberation Mono", monospace;
    letter-spacing: -0.6px;
  }

  /* title bar */
  .title {
    display: flex;
    align-items: center;
    flex: none;
    height: 24px;
    padding-left: 2px;
    background: #fff;
  }

  .ttext {
    margin-left: 4px;
    color: #7d7d7d;
    font: 13px/16px "Noto Sans CJK SC", sans-serif;
    letter-spacing: -0.2px;
    white-space: nowrap;
  }

  .winbtns {
    display: flex;
    align-items: center;
    gap: 34px;
    margin-left: auto;
    padding-right: 19px;
  }

  .wmin {
    width: 11px;
    height: 1px;
    background: #888;
  }

  /* menu bar */
  .menu {
    display: flex;
    align-items: center;
    flex: none;
    height: 29px;
    padding-left: 7px;
    background: #fafbfc;
    white-space: nowrap;
  }

  .mitems {
    display: flex;
    gap: 10.5px;
    width: 779px;
  }

  .mextra {
    display: flex;
    align-items: center;
    gap: 3px;
  }

  .mdd {
    margin-right: 16px;
    color: #333;
    font-size: 9px;
  }

  .news {
    flex: none;
    margin-left: 30px;
    color: #6b3200;
    width: 164px;
  }

  .account {
    display: flex;
    align-items: center;
    gap: 5px;
    flex: 1;
    height: 26px;
    padding-left: 1px;
    background: #f5f5f5;
    border-radius: 3px;
  }

  .phone {
    font: 12.5px/16px "Liberation Sans", sans-serif;
  }

  .beans {
    margin-left: 4px;
  }

  .abell {
    margin-left: 8px;
  }

  .amore {
    margin-left: auto;
    margin-right: 3px;
  }

  /* tool bars */
  .toolbar {
    display: flex;
    flex: none;
    gap: 2px;
    height: 28px;
    margin-bottom: 2px;
  }

  .grp {
    display: flex;
    align-items: center;
    height: 28px;
    background: #f4f4f4;
    border-radius: 4px;
  }

  .g1 {
    width: 150px;
  }

  .g2 {
    width: 546px;
  }

  .g3 {
    flex: 1;
  }

  .tool {
    display: flex;
    align-items: center;
    flex: none;
    gap: 3px;
    white-space: nowrap;
  }

  .grey {
    color: #8d8d8d;
  }

  .sep {
    display: block;
    width: 1px;
    height: 22px;
    background: #c8c8c8;
  }

  .dd {
    display: block;
    width: 0;
    height: 0;
    border: 3px solid transparent;
    border-top: 3px solid #222;
    border-bottom: 0;
  }

  .grey .dd {
    border-top-color: #999;
  }

  .sym {
    width: 16px;
    color: #111;
    font: 700 13px/16px "Liberation Serif", serif;
    text-align: center;
  }

  .more {
    color: #222;
    font: 700 11px/12px "Liberation Sans", sans-serif;
  }

  .combo {
    display: flex;
    align-items: center;
    gap: 4px;
    box-sizing: border-box;
    width: 62px;
    height: 23px;
    padding-left: 3px;
    border: 1px solid #888;
    color: #8d8d8d;
  }

  .combo .dd {
    margin-left: 2px;
  }

  .sq {
    width: 13px;
    height: 13px;
    border: 1px solid #ccc;
    background: #e8e8e8;
  }

  .floor {
    display: flex;
    align-items: center;
    justify-content: space-between;
    box-sizing: border-box;
    width: 59px;
    height: 26px;
    padding: 0 3px 0 1px;
    background: #fff;
  }

  .work {
    display: flex;
    flex: 1;
    min-height: 0;
  }

  /* module navigation */
  .nav {
    display: flex;
    flex-direction: column;
    flex: none;
    width: 166px;
    margin-right: 6px;
    padding-top: 2px;
  }

  .navhead {
    display: flex;
    align-items: center;
    justify-content: space-between;
    box-sizing: border-box;
    height: 14px;
    border: 1px solid #888;
    border-radius: 2px;
    background: #eee;
    line-height: 12px;
  }

  .navbtns {
    display: flex;
    gap: 10px;
    padding-right: 2px;
  }

  .navbtn {
    box-sizing: border-box;
    flex: none;
    width: 164px;
    height: 22px;
    margin: 0 0 0 2px;
    padding: 0;
    border: 1px solid #b9b9b9;
    border-radius: 0;
    background: #f0f0f0;
    color: #111;
    font: inherit;
  }

  .navbtn.top {
    height: 21px;
  }

  .first {
    margin-top: 2px;
  }

  .navpanel {
    display: flex;
    flex-direction: column;
    flex: 1;
    min-height: 0;
    margin-left: 2px;
    padding-top: 2px;
  }

  .navtools {
    display: flex;
    align-items: center;
    gap: 7px;
    flex: none;
    height: 25px;
    padding-left: 6px;
    background: linear-gradient(#fff, #f0f0f0);
  }

  .navbox {
    display: flex;
    flex-direction: column;
    flex: 1;
    min-height: 0;
    border: 2px solid #8a8a8a;
    border-bottom-width: 3px;
    background: #f0f0f0;
  }

  .navscroll {
    display: flex;
    height: 467px;
    overflow: hidden;
  }

  .navtree {
    flex: 1;
    padding-top: 2px;
    background: #fff;
    overflow: hidden;
  }

  .nrow,
  .drow {
    position: relative;
    display: flex;
    align-items: center;
    height: 16px;
    font-size: 12px;
  }

  .gv {
    position: absolute;
    top: 0;
    bottom: 0;
    width: 1px;
    background: repeating-linear-gradient(#888 0 1px, transparent 1px 2px);
  }

  .gv.half {
    bottom: 8px;
  }

  .g16 {
    left: 12px;
  }

  .g35 {
    left: 31px;
  }

  .gh {
    position: absolute;
    top: 8px;
    height: 1px;
    background: repeating-linear-gradient(90deg, #888 0 1px, transparent 1px 2px);
  }

  .gh1 {
    left: 32px;
    width: 9px;
  }

  .leaf {
    display: flex;
    align-items: center;
    gap: 5px;
    position: relative;
    margin-left: 41px;
    padding-right: 2px;
  }

  .leaf.on {
    box-sizing: border-box;
    width: 93px;
    margin-left: 40px;
    padding-left: 1px;
    background: #d9d9d9;
  }

  .ntext {
    white-space: nowrap;
  }

  .fold {
    font-size: 13px;
  }

  .nfold {
    display: flex;
    align-items: center;
    position: relative;
    margin-left: 6px;
    background: transparent;
  }

  .gh2 {
    width: 6px;
    height: 1px;
    background: repeating-linear-gradient(90deg, #888 0 1px, transparent 1px 2px);
  }

  .nfold .ntext {
    margin-left: 5px;
  }

  .vbar {
    display: flex;
    flex-direction: column;
    align-items: center;
    flex: none;
    width: 16px;
    background: #f0f0f0;
  }

  .arr {
    display: flex;
    align-items: center;
    justify-content: center;
    flex: none;
    width: 16px;
    height: 16px;
  }

  .track {
    position: relative;
    flex: 1;
    width: 16px;
  }

  .thumb {
    position: absolute;
    left: 0;
    right: 0;
    background: #cdcdcd;
  }

  .t1 .thumb {
    top: 202px;
    height: 208px;
  }

  .t2 .thumb {
    top: 397px;
    height: 126px;
  }

  .hbar {
    display: flex;
    align-items: center;
    flex: none;
    height: 16px;
    background: #f0f0f0;
  }

  .htrack {
    flex: 1;
    height: 16px;
  }

  .htrack i {
    display: block;
    width: 102px;
    height: 100%;
    margin-left: 1px;
    background: #cdcdcd;
  }

  /* main column */
  .center {
    display: flex;
    flex-direction: column;
    flex: 1;
    min-width: 0;
  }

  .toolbar2 {
    display: flex;
    align-items: center;
    flex: none;
    height: 28px;
    margin-bottom: 2px;
    background: #f4f4f4;
    border-radius: 4px;
  }

  .cols {
    display: flex;
    flex: 1;
    min-height: 0;
  }

  .comps {
    display: flex;
    flex-direction: column;
    flex: none;
    width: 183px;
    margin-right: 6px;
    background: #fff;
  }

  .searchrow {
    display: flex;
    align-items: flex-end;
    flex: none;
    box-sizing: border-box;
    height: 29px;
    padding-bottom: 2px;
    background: #fff;
  }

  .searchbox {
    box-sizing: border-box;
    width: 157px;
    height: 23px;
    padding: 1px 3px;
    border: 1px solid #888;
    color: #888;
    font-size: 13px;
  }

  .searchbtn {
    margin: 0 0 3px 4px;
  }

  .treebox {
    display: flex;
    flex: 1;
    min-height: 0;
    border: 1px solid #888;
    border-width: 1px 2px 2px 1px;
    background: #fff;
  }

  .tree {
    flex: 1;
    padding-top: 1px;
    overflow: hidden;
  }

  .v2 {
    align-self: stretch;
    width: 16px;
    margin-top: 1px;
  }

  .g30 {
    left: 30px;
  }

  .g49 {
    left: 49px;
  }

  .gh3 {
    left: 50px;
    width: 9px;
  }

  .droot {
    display: flex;
    align-items: center;
    position: relative;
    margin-left: 25px;
  }

  .dchev {
    display: block;
    width: 10px;
    height: 10px;
    background: #fff;
  }

  .gh4 {
    width: 4px;
    height: 1px;
    margin: 0 2px 0 1px;
    background: repeating-linear-gradient(90deg, #888 0 1px, transparent 1px 2px);
  }

  .gh4.long {
    width: 6px;
    margin: 0 1px 0 0;
  }

  .dname,
  .dlabel {
    font: 11px/16px "Liberation Mono", monospace;
    letter-spacing: -0.6px;
    white-space: nowrap;
  }

  .dname {
    margin-left: 8px;
  }

  .dchild {
    display: flex;
    align-items: center;
    gap: 7px;
    position: relative;
    box-sizing: border-box;
    width: 93px;
    height: 16px;
    margin-left: 58px;
    padding-left: 3px;
  }

  .dlabel span {
    font: 12px/16px "Noto Sans CJK SC", sans-serif;
    letter-spacing: 0;
  }

  .dchild.sel {
    background: #316ac5;
    color: #fff;
  }

  /* property editor */
  .editor {
    display: flex;
    flex-direction: column;
    flex: 1;
    min-width: 0;
    margin-right: 5px;
    padding-bottom: 3px;
    background: #fff;
  }

  .tabs {
    display: flex;
    align-items: flex-end;
    flex: none;
    height: 21px;
    background: #f4f4f4;
  }

  .tab {
    box-sizing: border-box;
    width: 61px;
    height: 20px;
    padding: 0 0 0 4px;
    border: 1px solid #ddd;
    border-bottom: 0;
    background: #fff;
    font-size: 12px;
  }

  .page {
    flex: 1;
    padding-top: 3px;
    border: 1px solid #ccc;
    border-width: 1px 2px 2px 1px;
    background: #fff;
  }

  .grid {
    width: 371px;
    margin-left: 1px;
  }

  .gr {
    display: grid;
    grid-template-columns: 21px 191px 126px 31px;
    height: 19px;
    line-height: 18px;
    font-size: 12px;
  }

  .gr > span {
    box-sizing: border-box;
    border-right: 1px solid #c4c4c4;
    border-bottom: 1px solid #c4c4c4;
    white-space: nowrap;
    overflow: hidden;
  }

  .head {
    height: 23px;
    line-height: 22px;
  }

  .head > span {
    background: linear-gradient(#fff, #f0f0f0);
    text-align: center;
  }

  .head > span.hv {
    background: linear-gradient(#fbe3b4, #f3c574);
    color: #5f0a78;
    font-size: 12px;
  }

  .c0 {
    padding-left: 5px;
    background: #f0f0f0;
    font-family: "Liberation Sans", sans-serif;
    font-size: 11px;
  }

  .head .c0 {
    padding: 0;
  }

  .nm {
    padding-left: 20px;
  }

  .link {
    color: #0000e6;
  }

  .muted {
    display: flex;
    align-items: center;
    gap: 4px;
    padding-left: 3px;
    color: #777;
  }

  .plusbox {
    display: block;
    box-sizing: border-box;
    width: 12px;
    height: 12px;
    border: 1px solid #888;
    color: #111;
    font: 12px/9px "Liberation Sans", sans-serif;
    text-align: center;
  }

  .val {
    padding-left: 3px;
  }

  .val span:not(.lat) {
    font-size: 11px;
  }

  .c3 {
    display: flex;
    align-items: center;
    justify-content: center;
  }

  .chk {
    display: block;
    box-sizing: border-box;
    width: 13px;
    height: 13px;
    border: 1px solid #333;
    background: #fff;
  }

  .cur .c0 {
    background: #ffd596;
    color: #800040;
  }

  .cur .nm {
    background: #0078d7;
    color: #fff;
  }

  .cur .val {
    background: #d5e8f8;
  }

  /* status bar */
  .status {
    display: flex;
    flex: none;
    gap: 2px;
    height: 23px;
    padding-top: 1px;
    box-sizing: border-box;
    background: #f0f0f0;
  }

  .st {
    box-sizing: border-box;
    height: 21px;
    padding: 1px 1px 0 2px;
    border: 1px solid #dcdcdc;
    white-space: nowrap;
    overflow: hidden;
  }

  .s0 {
    width: 149px;
  }

  .s1 {
    width: 77px;
  }

  .s2 {
    width: 97px;
  }

  .s3 {
    width: 47px;
  }

  .s4 {
    width: 914px;
  }

  .s5 {
    flex: 1;
  }

  /* task bar */
  .taskbar {
    display: flex;
    align-items: center;
    flex: none;
    height: 40px;
    background: #0a1d27;
    color: #fff;
  }

  .start {
    display: flex;
    align-items: center;
    justify-content: center;
    width: 48px;
    height: 40px;
    background: #000;
  }

  .tsearch {
    display: flex;
    align-items: center;
    box-sizing: border-box;
    width: 344px;
    height: 40px;
    padding: 0 14px 0 10px;
    background: #f2f2f2;
    color: #444;
  }

  .cortana {
    box-sizing: border-box;
    width: 20px;
    height: 20px;
    margin-right: 9px;
    border: 2.500px solid #222;
    border-radius: 50%;
  }

  .thint {
    flex: 1;
    font-size: 13px;
  }

  .tapps {
    display: flex;
    height: 40px;
    margin-left: 6px;
  }

  .tapp {
    position: relative;
    display: flex;
    align-items: center;
    justify-content: center;
    height: 40px;
  }

  .tsep {
    width: 2px;
    height: 20px;
    margin-right: 5px;
    background: #3b4a52;
  }

  .tapp.on::after {
    content: "";
    position: absolute;
    left: 7px;
    right: 7px;
    bottom: 0;
    height: 2px;
    background: #76b9ed;
  }

  .tapp.act {
    background: #37474f;
  }

  .tapp.act::after {
    left: 0;
    right: 0;
  }

  .tlink {
    margin-left: 18px;
    padding-left: 13px;
    border-left: 1px solid #45545c;
    color: #ccc;
    line-height: 20px;
  }

  .people {
    margin-left: 20px;
  }

  .tray {
    display: flex;
    align-items: center;
    margin-left: 12px;
    flex: 1;
  }

  .tray > span {
    display: flex;
    justify-content: center;
  }

  .tzh {
    width: 26px;
    font-size: 13px;
  }

  .ts {
    width: 20px;
    height: 20px;
    margin-left: 5px;
    border-radius: 4px;
    background: #e8501c;
    color: #fff;
    font: 700 15px/20px "Liberation Sans", sans-serif;
    align-items: center;
  }

  .clock {
    flex-direction: column;
    align-items: center;
    width: 62px;
    color: #ddd;
    line-height: 20px;
  }

  .clock b {
    font-weight: 400;
  }

  .notif {
    margin-left: 31px;
  }

  /* floating drawing window */
  .preview {
    position: absolute;
    left: 1058px;
    top: 83px;
    box-sizing: border-box;
    width: 295px;
    height: 594px;
    padding: 6px 8px;
    border: 1px solid #555;
    background: #d5e1ef;
  }

  .cad {
    display: block;
    border-top: 1px solid #fff;
    background: #000;
  }

  .cadtext text {
    fill: #fff;
    font-family: "Noto Sans CJK SC", sans-serif;
  }

  .cadtext .captitle {
    fill: #cfe6f8;
  }

  /* dialog */
  .dialog {
    position: absolute;
    left: 455px;
    top: 350px;
    box-sizing: border-box;
    width: 490px;
    height: 291px;
    border: 1px solid #4a90d0;
    background: #f0f0f0;
  }

  .dtitle {
    display: flex;
    align-items: center;
    justify-content: space-between;
    height: 25px;
    padding: 0 9px 0 3px;
    background: #fff;
    color: #222;
  }

  .dbody {
    padding: 5px 7px 0 6px;
  }

  .dinput {
    box-sizing: border-box;
    width: 475px;
    height: 27px;
    border: 1px solid #888;
    background: #fff;
    font: 700 18.5px/25px "Liberation Serif", serif;
    text-align: center;
  }

  .dcols {
    display: flex;
    gap: 6px;
    margin-top: 11px;
  }

  .dcol {
    display: flex;
    flex-direction: column;
  }

  .dleft {
    width: 252px;
  }

  .dright {
    width: 218px;
  }

  .dlab {
    height: 20px;
    font-size: 12px;
  }

  .lab2 {
    padding-left: 9px;
  }

  .dlist,
  .dnote {
    box-sizing: border-box;
    height: 159px;
    border: 1px solid #aaa;
  }

  .dlist {
    display: flex;
    flex-direction: column;
    padding: 1px;
  }

  .ditems {
    flex: 1;
  }

  .ditem {
    height: 17px;
    padding-left: 2px;
    line-height: 16px;
  }

  .ditem.sel {
    background: #cbdcec;
  }

  .dh {
    background: #f0f0f0;
  }

  .dh .htrack i {
    width: 17px;
    margin-left: 0;
    background: #ccc;
  }

  .dnote {
    padding: 1px 2px;
    font-size: 12px;
    line-height: 17px;
    white-space: nowrap;
  }

  .qt {
    letter-spacing: -1.3px;
  }

  .dbtns {
    display: flex;
    gap: 34px;
    margin: 11px 0 0 310px;
  }

  .dbtn {
    box-sizing: border-box;
    width: 58px;
    height: 21px;
    padding: 0;
    border: 1px solid #adadad;
    border-radius: 0;
    background: #e1e1e1;
    color: #111;
    font: inherit;
  }

  .ok {
    border: 2px solid #0078d7;
  }

  /* red frames */
  .mark {
    position: absolute;
    box-sizing: border-box;
    border: 7px solid #f00;
    pointer-events: none;
  }

  .m1 {
    left: 532px;
    top: 128px;
    width: 230px;
    height: 207px;
  }

  .m2 {
    left: 679px;
    top: 412px;
    width: 283px;
    height: 125px;
  }

  /* input method */
  .imeball {
    position: absolute;
    left: 856px;
    top: -11px;
    box-sizing: border-box;
    width: 47px;
    height: 25px;
    border: 2px solid #bbb;
    border-radius: 0 0 23px 23px;
    background: #4cc45a;
    color: #fff;
    font: 700 11px/36px "Liberation Sans", sans-serif;
    text-align: center;
  }

  .ime {
    position: absolute;
    left: 816px;
    top: 14px;
    display: flex;
    align-items: center;
    gap: 6px;
    box-sizing: border-box;
    width: 205px;
    height: 23px;
    padding-left: 31px;
    border: 1px solid #b7c9d8;
    border-left: 0;
    background: #f3f7fb;
    color: #1d74c8;
  }

  .imelogo {
    position: absolute;
    left: 0;
    top: -3px;
    width: 24px;
    height: 27px;
    border-radius: 5px;
    background: #ee5a24;
    color: #fff;
    font: 700 24px/27px "Liberation Sans", sans-serif;
    text-align: center;
    transform: skewX(-6deg);
  }

  .imez {
    font-size: 16px;
    font-weight: 700;
    line-height: 20px;
  }

  .imep {
    width: 16px;
    font: 700 14px/14px "Liberation Sans", sans-serif;
  }
</style>
